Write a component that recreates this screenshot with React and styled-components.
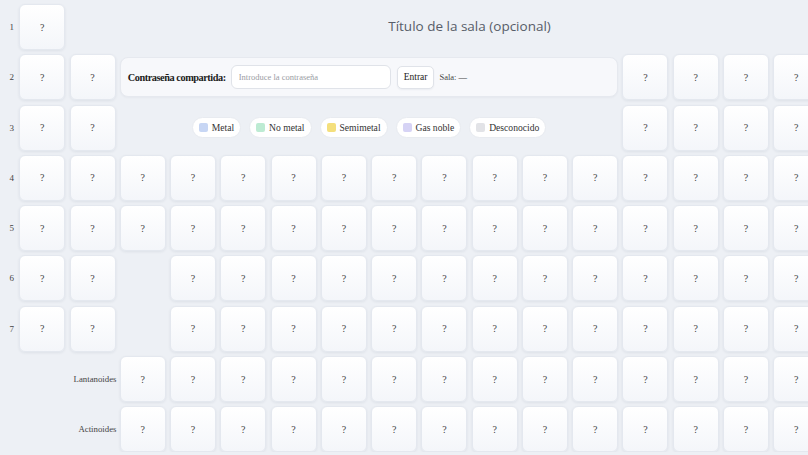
import React from 'react';
import styled, { createGlobalStyle } from 'styled-components';

const GlobalStyle = createGlobalStyle`
  html, body {
    margin: 0;
    padding: 0;
    background: #edf0f5;
    overflow: hidden;
  }
  body {
    font-family: "Liberation Serif", "DejaVu Serif", serif;
    color: #222;
  }
`;

// label column + 18 element columns, everything placed on the same grid
const Board = styled.div`
  display: grid;
  grid-template-columns: 12px repeat(18, 46px);
  grid-auto-rows: 46px;
  gap: 4.3px 4.27px;
  padding: 4px 0 0 3px;
  width: max-content;
`;

const RowLabel = styled.div`
  grid-column: 1;
  grid-row: ${p => p.$row};
  display: flex;
  align-items: center;
  justify-content: flex-end;
  padding-right: 1px;
  font-size: 9px;
  color: #444;
`;

const SeriesLabel = styled.div`
  grid-column: 1 / 4;
  grid-row: ${p => p.$row};
  display: flex;
  align-items: center;
  justify-content: flex-end;
  margin-right: -1px;
  font-size: 8.8px;
  color: #444;
`;

const Tile = styled.div`
  grid-column: ${p => p.$col};
  grid-row: ${p => p.$row};
  box-sizing: border-box;
  border-radius: 6px;
  background: linear-gradient(180deg, #ffffff 0%, #f4f6fa 100%);
  border: 1px solid #e4e8ef;
  box-shadow: 0 1px 3px rgba(40, 50, 80, 0.08);
  display: flex;
  align-items: center;
  justify-content: center;
  font-size: 10px;
  color: #444;
`;

const Title = styled.h1`
  grid-column: 3 / 19;
  grid-row: 1;
  margin: -2px 0 0;
  align-self: center;
  text-align: center;
  font-family: "Open Sans", "Noto Sans", sans-serif;
  font-weight: 500;
  font-size: 13.5px;
  color: #585d69;
`;

const PasswordBar = styled.div`
  grid-column: 4 / 14;
  grid-row: 2;
  align-self: center;
  height: 40px;
  box-sizing: border-box;
  display: flex;
  align-items: center;
  gap: 5px;
  padding: 0 7px;
  background: #f7f8fb;
  border: 1px solid #e6e9ef;
  border-radius: 8px;
  box-shadow: 0 1px 2px rgba(40, 50, 80, 0.04);
`;

const BarLabel = styled.span`
  font-size: 10.3px;
  font-weight: 700;
  color: #1c1c1c;
  letter-spacing: -0.45px;
`;

const PasswordInput = styled.input`
  width: 160px;
  height: 24px;
  box-sizing: border-box;
  border: 1px solid #e0e3e9;
  border-radius: 6px;
  background: #fff;
  padding: 0 7px;
  font-family: inherit;
  font-size: 8.5px;
  color: #333;
  outline: none;
  &::placeholder {
    color: #9a9ca3;
  }
`;

const EnterButton = styled.button`
  height: 23px;
  box-sizing: border-box;
  margin-left: 1px;
  padding: 0 6px;
  border: 1px solid #e0e3e9;
  border-radius: 5px;
  background: #fff;
  font-family: inherit;
  font-size: 9.5px;
  color: #222;
  box-shadow: 0 1px 2px rgba(40, 50, 80, 0.06);
`;

const RoomInfo = styled.span`
  font-size: 8.5px;
  color: #444;
`;

const Legend = styled.div`
  grid-column: 4 / 14;
  grid-row: 3;
  display: flex;
  align-items: center;
  justify-content: center;
  gap: 8px;
`;

const Chip = styled.div`
  display: flex;
  align-items: center;
  gap: 4px;
  height: 21px;
  box-sizing: border-box;
  padding: 0 6px;
  background: #fff;
  border: 1px solid #e8ebf0;
  border-radius: 11px;
  font-size: 9.6px;
  color: #333;
`;

const Swatch = styled.span`
  width: 9px;
  height: 9px;
  border-radius: 2px;
  background: ${p => p.$color};
`;

const legend = [
  { label: 'Metal', color: '#c7d6f4' },
  { label: 'No metal', color: '#bdebd3' },
  { label: 'Semimetal', color: '#f4df7c' },
  { label: 'Gas noble', color: '#d6d3f5' },
  { label: 'Desconocido', color: '#e2e3e7' },
];

const range = (a, b) => Array.from({ length: b - a + 1 }, (_, i) => a + i);

// table columns (1..18) present in each period
const periods = [
  [1, 18],
  [1, 2, ...range(13, 18)],
  [1, 2, ...range(13, 18)],
  range(1, 18),
  range(1, 18),
  [1, 2, ...range(4, 18)],
  [1, 2, ...range(4, 18)],
];

const series = [
  { label: 'Lantanoides', row: 8 },
  { label: 'Actinoides', row: 9 },
];

export default function App() {
  return (
    <>
      <GlobalStyle />
      <Board>
        {periods.map((cols, i) => (
          <React.Fragment key={i}>
            <RowLabel $row={i + 1}>{i + 1}</RowLabel>
            {cols.map(c => (
              <Tile key={c} $row={i + 1} $col={c + 1}>?</Tile>
            ))}
          </React.Fragment>
        ))}

        <Title>Título de la sala (opcional)</Title>

        <PasswordBar>
          <BarLabel>Contraseña compartida:</BarLabel>
          <PasswordInput placeholder="Introduce la contraseña" />
          <EnterButton>Entrar</EnterButton>
          <RoomInfo>Sala: —</RoomInfo>
        </PasswordBar>

        <Legend>
          {legend.map(l => (
            <Chip key={l.label}>
              <Swatch $color={l.color} />
              {l.label}
            </Chip>
          ))}
        </Legend>

        {series.map(s => (
          <React.Fragment key={s.label}>
            <SeriesLabel $row={s.row}>{s.label}</SeriesLabel>
            {range(3, 17).map(c => (
              <Tile key={c} $row={s.row} $col={c + 1}>?</Tile>
            ))}
          </React.Fragment>
        ))}
      </Board>
    </>
  );
}
